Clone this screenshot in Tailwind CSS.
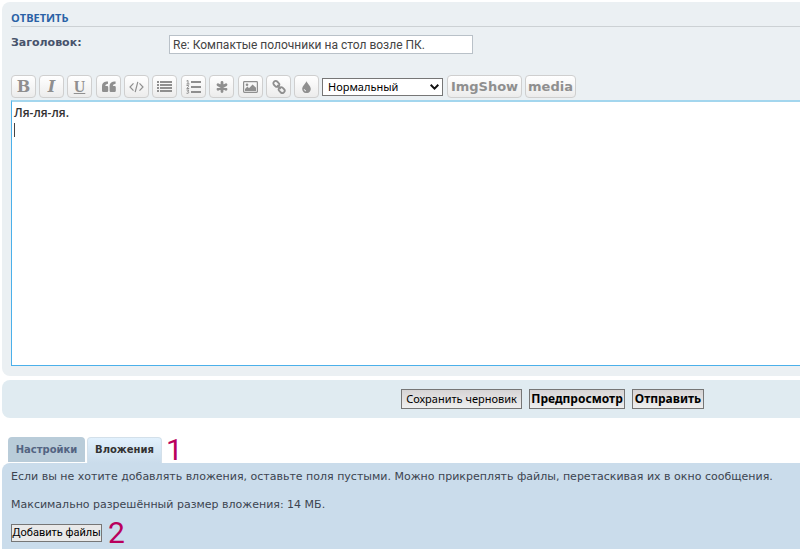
<!DOCTYPE html>
<html lang="ru">
<head>
    <meta charset="UTF-8">
    <meta name="viewport" content="width=device-width, initial-scale=1.0">
    <title>Ответить</title>
    <script src="https://cdn.jsdelivr.net/npm/@tailwindcss/browser@4"></script>
</head>
<body class="bg-white text-[#47536b] font-['DejaVu_Sans',sans-serif] overflow-x-hidden">

    <form class="pl-0.5 pt-0.5">

        <!-- Message editor -->
        <section class="bg-[#ebf0f3] rounded-l-lg pl-[9px] pt-2 pb-[10px]">
            <h3 class="h-4 text-[11px] leading-4 font-bold text-[#2a62a6] font-['Open_Sans',sans-serif]">ОТВЕТИТЬ</h3>
            <div class="border-t border-[#ccd1d4] flex pt-2">
                <label for="subject" class="w-[158px] text-[11px] leading-4 font-bold">Заголовок:</label>
                <input id="subject" type="text" value="Re: Компактые полочники на стол возле ПК." class="w-[304px] h-[19px] px-[3px] bg-white border border-[#b9c1c8] text-[12px] text-[#444] font-['Roboto',sans-serif]">
            </div>

            <div class="flex items-center gap-[3px] mt-[21px] text-[#8f8f8f] font-bold">
                <button type="button" aria-label="Жирный" class="w-[25px] h-[23px] rounded border border-[#cfcfcf] bg-linear-to-b from-white to-[#ececec] text-[16px] leading-5 font-['DejaVu_Serif',serif]">B</button>
                <button type="button" aria-label="Курсив" class="w-[25px] h-[23px] rounded border border-[#cfcfcf] bg-linear-to-b from-white to-[#ececec] text-[16px] leading-5 italic font-['DejaVu_Serif',serif]">I</button>
                <button type="button" aria-label="Подчёркнутый" class="w-[25px] h-[23px] mr-px rounded border border-[#cfcfcf] bg-linear-to-b from-white to-[#ececec] text-[16px] leading-5 underline font-['Liberation_Serif',serif]">U</button>
                <button type="button" aria-label="Цитата" class="w-[25px] h-[23px] rounded border border-[#cfcfcf] bg-linear-to-b from-white to-[#ececec] flex items-center justify-center">
                    <svg class="w-[14px] h-3" viewBox="0 0 14 12" fill="currentColor"><path d="M1.2 11Q0 11 0 9.8V5Q0 1 4.4 .5H6V2.8Q3.2 3 3.2 5H5Q6.2 5 6.2 6.2V9.8Q6.2 11 5 11ZM8.8 11Q7.6 11 7.6 9.8V5Q7.6 1 12 .5H13.6V2.8Q10.8 3 10.8 5H12.6Q13.8 5 13.8 6.2V9.8Q13.8 11 12.6 11Z"/></svg>
                </button>
                <button type="button" aria-label="Код" class="w-[25px] h-[23px] rounded border border-[#cfcfcf] bg-linear-to-b from-white to-[#ececec] flex items-center justify-center">
                    <svg class="w-[15px] h-3" viewBox="0 0 15 12" fill="none" stroke="currentColor" stroke-width="1.2"><path d="M4.5 2.3L1 6l3.5 3.7M10.5 2.3L14 6l-3.5 3.7M8.8 .8L6.2 11.2"/></svg>
                </button>
                <button type="button" aria-label="Список" class="w-[25px] h-[23px] mr-px rounded border border-[#cfcfcf] bg-linear-to-b from-white to-[#ececec] flex items-center justify-center">
                    <svg class="w-[15px] h-3" viewBox="0 0 15 12" fill="currentColor"><path d="M0 0h2v2H0zM0 3h2v2H0zM0 6h2v2H0zM0 9h2v2H0zM3 0h12v2H3zM3 3h12v2H3zM3 6h12v2H3zM3 9h12v2H3z"/></svg>
                </button>
                <button type="button" aria-label="Нумерованный список" class="w-[25px] h-[23px] rounded border border-[#cfcfcf] bg-linear-to-b from-white to-[#ececec] flex items-center justify-center">
                    <svg class="w-[15px] h-[14px]" viewBox="0 0 15 14"><path fill="currentColor" d="M5 1h10v2H5zM5 6h10v2H5zM5 11h10v2H5z"/><path fill="none" stroke="currentColor" d="M.5 1L2 .5V4M.5 4h3M.5 5.5h2v1L.8 8.5H3.2M.5 10h2.3L1.6 11.4q1.4 0 1.2 1.2Q2.4 13.7.5 13.2"/></svg>
                </button>
                <button type="button" aria-label="Элемент списка" class="w-[25px] h-[23px] mr-px rounded border border-[#cfcfcf] bg-linear-to-b from-white to-[#ececec] flex items-center justify-center">
                    <svg class="w-3 h-3" viewBox="0 0 12 12" stroke="currentColor" stroke-width="2.8" stroke-linecap="round"><path d="M6 1.4v9.2M2 3.7l8 4.6M10 3.7L2 8.3"/></svg>
                </button>
                <button type="button" aria-label="Изображение" class="w-[25px] h-[23px] rounded border border-[#cfcfcf] bg-linear-to-b from-white to-[#ececec] flex items-center justify-center">
                    <svg class="w-[15px] h-3" viewBox="0 0 15 12"><rect x=".6" y=".6" width="13.8" height="10.8" rx=".8" fill="none" stroke="currentColor" stroke-width="1.2"/><circle cx="4" cy="3.8" r="1.3" fill="currentColor"/><path fill="currentColor" d="M2 10V8l2.4-2.4L6 7.2 9.6 3.5 13 6.8V10z"/></svg>
                </button>
                <button type="button" aria-label="Ссылка" class="w-[25px] h-[23px] rounded border border-[#cfcfcf] bg-linear-to-b from-white to-[#ececec] flex items-center justify-center">
                    <svg class="w-[14px] h-[14px]" viewBox="0 0 14 14" fill="none" stroke="currentColor" stroke-width="1.8"><rect x="1.2" y="1.6" width="6.2" height="4.6" rx="2" transform="rotate(45 4.3 3.9)"/><rect x="6.6" y="7.8" width="6.2" height="4.6" rx="2" transform="rotate(45 9.7 10.1)"/><path d="M5.2 5.2l3.6 3.6"/></svg>
                </button>
                <button type="button" aria-label="Цвет" class="w-[25px] h-[23px] rounded border border-[#cfcfcf] bg-linear-to-b from-white to-[#ececec] flex items-center justify-center">
                    <svg class="w-[9px] h-3" viewBox="0 0 9 12"><path fill="currentColor" d="M4.5 0C5 2.4 8.8 5 8.8 8A4.2 4 0 0 1 .2 8C.2 5 4 2.4 4.5 0z"/><path d="M2.2 8.2q.2 1.7 1.8 1.7" stroke="#f4f4f4" fill="none"/></svg>
                </button>
                <div class="relative mr-px">
                    <select aria-label="Размер шрифта" class="block appearance-none w-[121px] h-[18px] pl-[5px] bg-white border border-[#767676] text-[11px] leading-4 font-normal text-black font-['Noto_Sans',sans-serif]">
                        <option>Нормальный</option>
                    </select>
                    <svg class="absolute right-1 top-1.5 w-[9px] h-1.5 pointer-events-none" viewBox="0 0 9 6" fill="none" stroke="#111" stroke-width="2"><path d="M.7 .8l3.8 3.8L8.3 .8"/></svg>
                </div>
                <button type="button" class="w-[75px] h-[23px] rounded border border-[#cfcfcf] bg-linear-to-b from-white to-[#ececec] text-[13px] leading-5">ImgShow</button>
                <button type="button" class="w-[51px] h-[23px] rounded border border-[#cfcfcf] bg-linear-to-b from-white to-[#ececec] text-[13px] leading-5">media</button>
            </div>

            <div class="relative mt-0.5">
                <textarea aria-label="Сообщение" class="block w-full h-[266px] px-0.5 py-0.5 resize-none bg-white border-l border-b border-t-2 border-l-[#4bb0ea] border-b-[#4bb0ea] border-t-[#a3d6ee] text-[12px] leading-[18px] font-semibold text-[#333] font-['Open_Sans',sans-serif]">Ля-ля-ля.
</textarea>
                <span class="absolute left-[3px] top-[23px] w-px h-[14px] bg-[#444]"></span>
            </div>
        </section>

        <!-- Submit buttons -->
        <section class="mt-1 h-[38px] bg-[#e0ebf1] rounded-l-lg pl-[50%] flex items-center gap-[7px] text-[11px] text-black font-['Noto_Sans',sans-serif]">
            <button type="button" class="w-[121px] h-5 border border-[#767676] bg-linear-to-b from-[#d6d4d5] to-[#efefef] leading-4 whitespace-nowrap">Сохранить черновик</button>
            <button type="button" class="w-[96px] h-5 border border-[#767676] bg-linear-to-b from-[#d6d4d5] to-[#efefef] text-[12px] leading-4 font-bold">Предпросмотр</button>
            <button type="submit" class="w-[72px] h-5 border border-[#767676] bg-linear-to-b from-[#d6d4d5] to-[#efefef] text-[12px] leading-4 font-bold">Отправить</button>
        </section>

        <!-- Tabs -->
        <nav class="mt-[19px] pl-1.5 flex items-end gap-0.5 text-[10px] leading-4 font-bold">
            <a href="#options" class="w-[77px] h-[25px] mb-px pt-[5px] text-center rounded-t bg-[#b9ccd9] text-[#536482]">Настройки</a>
            <a href="#attach" class="w-[75px] h-[26px] pt-1 text-center rounded-t border border-b-0 border-[#d3e0ea] bg-linear-to-b from-[#e2f1fd] to-[#cadceb] text-[#333]">Вложения</a>
            <span class="ml-0.5 text-[30px] leading-[26px] font-normal text-[#b9005c] font-['Roboto',sans-serif]">1</span>
        </nav>

        <!-- Attachments -->
        <section id="attach" class="bg-[#cadceb] rounded-tl-lg pl-[9px] pt-1.5 h-[86px] text-[11px] leading-4 text-[#3c4450]">
            <p class="whitespace-nowrap">Если вы не хотите добавлять вложения, оставьте поля пустыми. Можно прикреплять файлы, перетаскивая их в окно сообщения.</p>
            <p class="mt-3">Максимально разрешённый размер вложения: 14 МБ.</p>
            <div class="mt-2 flex items-center gap-1.5">
                <button type="button" class="w-[91px] h-[18px] border border-[#767676] bg-[#e9e9e9] leading-4 text-black whitespace-nowrap font-['Roboto',sans-serif]">Добавить файлы</button>
                <span class="text-[30px] leading-6 text-[#b9005c] font-['Roboto',sans-serif]">2</span>
            </div>
        </section>
    </form>

</body>
</html>
